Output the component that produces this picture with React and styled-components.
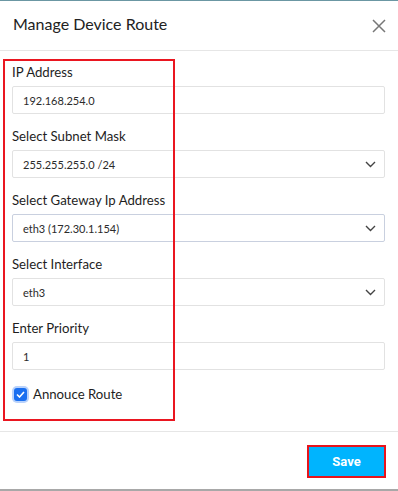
import React from 'react';
import styled, { createGlobalStyle } from 'styled-components';

const GlobalStyle = createGlobalStyle`
  html, body {
    margin: 0;
    padding: 0;
    background: #ffffff;
    font-family: Lato, "Open Sans", sans-serif;
  }
  * { box-sizing: border-box; }
`

const Modal = styled.div`
  width: 398px;
  height: 491px;
  background: #fff;
  border-top: 1px solid #6b97a3;
  border-bottom: 2px solid #a8a8a8;
  display: flex;
  flex-direction: column;
`
const Header = styled.div`
  height: 50px;
  padding: 13px 12px 0 13px;
  display: flex;
  justify-content: space-between;
  align-items: flex-start;
  border-bottom: 1px solid #e6e6e6;
`
const Title = styled.h2`
  margin: 0;
  font-size: 16px;
  line-height: 20px;
  font-weight: 400;
  color: #222;
`
const Close = styled.button`
  border: none;
  background: none;
  padding: 0;
  margin-top: 5px;
  width: 14px;
  height: 14px;
  display: flex;
  cursor: pointer;
`
const Body = styled.div`
  position: relative;
  padding: 13px 13px 29px 12px;
  border-bottom: 1px solid #e6e6e6;
`
const Highlight = styled.div`
  position: absolute;
  top: 8px;
  left: 3px;
  width: 172px;
  height: 362px;
  border: 2px solid #ea1620;
  pointer-events: none;
`
const Field = styled.div`
  display: flex;
  flex-direction: column;
  gap: 5px;
  margin-bottom: 14px;
`
const Label = styled.label`
  font-size: 13.2px;
  line-height: 17px;
  color: #1e1e1e;
`
const Box = styled.div`
  height: 28px;
  border: 1px solid ${p => (p.$focus ? '#c9d0df' : '#e2e2e2')};
  border-radius: 2px;
  background: #fff;
  display: flex;
  align-items: center;
  justify-content: space-between;
  padding: 0 8px 0 10px;
  font-size: 11px;
  color: #2b2b2b;
`
const Chevron = () => (
  <svg width="11" height="7" viewBox="0 0 11 7">
    <polyline points="1,1 5.5,5.5 10,1" fill="none" stroke="#444" strokeWidth="1.4" />
  </svg>
)
const CheckRow = styled.div`
  display: flex;
  align-items: center;
  gap: 6px;
  padding-left: 2px;
  margin-top: 16px;
  font-size: 13.2px;
  color: #1e1e1e;
`
const Check = styled.span`
  width: 13px;
  height: 13px;
  border-radius: 3px;
  background: #1a6ff0;
  box-shadow: 0 0 0 2px #b9d2fb;
  display: flex;
  align-items: center;
  justify-content: center;
`
const Footer = styled.div`
  flex: 1;
  display: flex;
  justify-content: flex-end;
  align-items: flex-start;
  padding: 13px 12px 0 0;
`
const SaveButton = styled.button`
  width: 79px;
  height: 33px;
  background: #00b4fe;
  border: 2px solid #e8141c;
  color: #fff;
  font-family: Roboto, "Liberation Sans", sans-serif;
  font-weight: 700;
  font-size: 13px;
  cursor: pointer;
`

const fields = [
  { label: 'IP Address', value: '192.168.254.0' },
  { label: 'Select Subnet Mask', value: '255.255.255.0 /24', select: true },
  { label: 'Select Gateway Ip Address', value: 'eth3 (172.30.1.154)', select: true, focus: true },
  { label: 'Select Interface', value: 'eth3', select: true },
  { label: 'Enter Priority', value: '1' },
]

export default function App() {
  return (
    <>
      <GlobalStyle />
      <Modal>
        <Header>
          <Title>Manage Device Route</Title>
          <Close aria-label="close">
            <svg width="14" height="14" viewBox="0 0 14 14">
              <path d="M1 1 L13 13 M13 1 L1 13" stroke="#777" strokeWidth="1.5" />
            </svg>
          </Close>
        </Header>
        <Body>
          {fields.map(f => (
            <Field key={f.label}>
              <Label>{f.label}</Label>
              <Box $focus={f.focus}>
                <span>{f.value}</span>
                {f.select && <Chevron />}
              </Box>
            </Field>
          ))}
          <CheckRow>
            <Check>
              <svg width="9" height="7" viewBox="0 0 9 7">
                <polyline points="1,3.5 3.5,6 8,1" fill="none" stroke="#fff" strokeWidth="1.6" />
              </svg>
            </Check>
            Annouce Route
          </CheckRow>
          <Highlight />
        </Body>
        <Footer>
          <SaveButton>Save</SaveButton>
        </Footer>
      </Modal>
    </>
  )
}
